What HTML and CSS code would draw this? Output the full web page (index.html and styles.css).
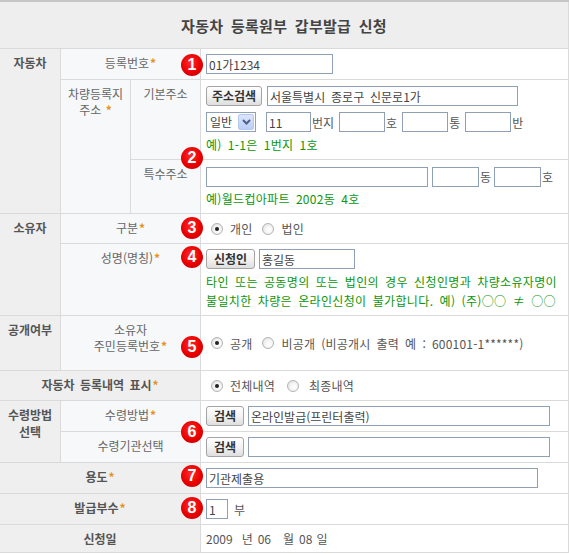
FILE: index.html
```html
<!DOCTYPE html>
<html lang="ko">
<head>
<meta charset="utf-8">
<title>자동차 등록원부 갑부발급 신청</title>
<link rel="stylesheet" href="styles.css">
</head>
<body>
<div class="form">
  <div class="title">자동차 등록원부 갑부발급 신청</div>

  <div class="sec rows3">자동차</div>
  <div class="lab cols2">등록번호<span class="req">*</span></div>
  <div class="val">
    <span class="badge b1">1</span>
    <input class="inp w127" type="text" value="01가1234">
  </div>

  <div class="lab rows2">차량등록지<br>주소 <span class="req">*</span></div>
  <div class="lab">기본주소</div>
  <div class="val stack addr">
    <span class="badge b2">2</span>
    <div class="line">
      <button class="btn w56" type="button">주소검색</button>
      <input class="inp w251" type="text" value="서울특별시 종로구 신문로1가">
    </div>
    <div class="line">
      <span class="sel"><span class="sel-text">일반</span><span class="sel-arrow"><svg width="9" height="6" viewBox="0 0 9 6"><path d="M1 1 L4.5 4.5 L8 1" fill="none" stroke="#4d6185" stroke-width="2"/></svg></span></span>
      <input class="inp w45 ml10" type="text" value="11"><span class="unit">번지</span>
      <input class="inp w46 ml5" type="text" value=""><span class="unit">호</span>
      <input class="inp w46 ml5" type="text" value=""><span class="unit">통</span>
      <input class="inp w46 ml5" type="text" value=""><span class="unit">반</span>
    </div>
    <div class="hint">예) 1-1은 1번지 1호</div>
  </div>

  <div class="lab">특수주소</div>
  <div class="val stack spec">
    <div class="line">
      <input class="inp w222" type="text" value="">
      <input class="inp w47 ml4" type="text" value=""><span class="unit">동</span>
      <input class="inp w47 ml3" type="text" value=""><span class="unit">호</span>
    </div>
    <div class="hint">예)월드컵아파트 2002동 4호</div>
  </div>

  <div class="sec rows2">소유자</div>
  <div class="lab cols2">구분<span class="req">*</span></div>
  <div class="val">
    <span class="badge b3">3</span>
    <span class="radio on"></span><span class="rtext">개인</span>
    <span class="radio ml9"></span><span class="rtext">법인</span>
  </div>

  <div class="lab cols2">성명(명칭)<span class="req">*</span></div>
  <div class="val stack name">
    <span class="badge b4">4</span>
    <div class="line">
      <button class="btn w49" type="button">신청인</button>
      <input class="inp w96 ml4" type="text" value="홍길동">
    </div>
    <div class="hint tall">타인 또는 공동명의 또는 법인의 경우 신청인명과 차량소유자명이<br>불일치한 차량은 온라인신청이 불가합니다. 예) (주)○○ ≠ ○○</div>
  </div>

  <div class="sec">공개여부</div>
  <div class="lab cols2">소유자<br>주민등록번호<span class="req">*</span></div>
  <div class="val">
    <span class="badge b5">5</span>
    <span class="radio on"></span><span class="rtext">공개</span>
    <span class="radio ml9"></span><span class="rtext">비공개 (비공개시 출력 예 : 600101-1******)</span>
  </div>

  <div class="sec cols3">자동차 등록내역 표시<span class="req">*</span></div>
  <div class="val">
    <span class="radio on"></span><span class="rtext">전체내역</span>
    <span class="radio ml12"></span><span class="rtext wide">최종내역</span>
  </div>

  <div class="sec rows2 tight">수령방법<br>선택</div>
  <div class="lab cols2">수령방법<span class="req">*</span></div>
  <div class="val">
    <span class="badge b6">6</span>
    <button class="btn w38" type="button">검색</button>
    <input class="inp w302 ml4" type="text" value="온라인발급(프린터출력)">
  </div>
  <div class="lab cols2">수령기관선택</div>
  <div class="val">
    <button class="btn w38" type="button">검색</button>
    <input class="inp w302 ml4" type="text" value="">
  </div>

  <div class="sec cols3">용도<span class="req">*</span></div>
  <div class="val">
    <span class="badge b7">7</span>
    <input class="inp w332" type="text" value="기관제출용">
  </div>

  <div class="sec cols3">발급부수<span class="req">*</span></div>
  <div class="val">
    <span class="badge b8">8</span>
    <input class="inp w22" type="text" value="1"><span class="unit u5">부</span>
  </div>

  <div class="sec cols3">신청일</div>
  <div class="val date">
    <span>2009</span><span class="d9">년</span><span class="d5">06</span><span class="d12">월</span><span class="d5">08</span><span class="d4">일</span>
  </div>
</div>
</body>
</html>
```

FILE: styles.css
```css
html, body {
  margin: 0;
  padding: 0;
  background: #ffffff;
}

body {
  font-family: "Noto Sans CJK KR", "Noto Sans", sans-serif;
  font-size: 12px;
  color: #555555;
}

.form {
  width: 569px;
  box-sizing: border-box;
  display: grid;
  grid-template-columns: 60px 69px 69px 367px;
  grid-template-rows: 46px 30px 79px 53px 29px 71px 54px 29px 30px 30px 30px 30px 27px;
  gap: 1px;
  background: #dadada;
  border-top: 2px solid #c6c6c6;
  padding: 0 1px 1px 0;
}

.title {
  grid-column: 1 / -1;
  background: #eeeeee;
  display: flex;
  align-items: center;
  justify-content: center;
  font-size: 15px;
  font-weight: bold;
  color: #444444;
  letter-spacing: 0.3px;
  word-spacing: 3px;
}

.sec {
  background: #efefef;
  font-weight: bold;
  color: #555555;
  text-align: center;
  padding-top: 6px;
  line-height: 16px;
  word-spacing: 2px;
}

.sec.tight {
  padding-top: 5px;
  line-height: 17px;
}

.lab {
  background: #f7f8fa;
  color: #666666;
  text-align: center;
  padding-top: 6px;
  line-height: 16px;
}

.rows2 { grid-row: span 2; }
.rows3 { grid-row: span 3; }
.cols2 { grid-column: span 2; }
.cols3 { grid-column: span 3; }

.req {
  color: #e8901c;
  font-weight: bold;
  margin-left: 1px;
}

.val {
  background: #ffffff;
  display: flex;
  align-items: center;
  padding-left: 5px;
  position: relative;
  color: #555555;
  word-spacing: 2.5px;
}

.val.stack {
  flex-direction: column;
  align-items: flex-start;
  justify-content: center;
}

.val.addr { gap: 6px; }
.val.addr .hint { margin-top: -1px; }
.val.spec { gap: 4px; }
.val.name { gap: 3px; }

.line {
  display: flex;
  align-items: center;
}

.inp {
  box-sizing: border-box;
  height: 20px;
  border: 1px solid #8e9fb6;
  padding: 0 2px;
  margin: 0;
  font-family: "Noto Sans CJK KR", "Noto Sans", sans-serif;
  font-size: 12px;
  color: #444444;
  background: #ffffff;
  outline: none;
  word-spacing: 2.5px;
}

.btn {
  box-sizing: border-box;
  height: 20px;
  padding: 0;
  margin: 0;
  border: 1px solid #a4a4a4;
  border-radius: 3px;
  background: linear-gradient(#ffffff 0%, #f3f3f3 50%, #dedede 100%);
  font-family: "Noto Sans CJK KR", "Noto Sans", sans-serif;
  font-size: 12px;
  font-weight: bold;
  color: #333333;
  line-height: 18px;
}

.w22 { width: 22px; }
.w38 { width: 38px; }
.w45 { width: 45px; }
.w46 { width: 46px; }
.w47 { width: 47px; }
.w49 { width: 49px; }
.w56 { width: 56px; margin-right: 5px; }
.w96 { width: 96px; }
.w127 { width: 127px; }
.w222 { width: 222px; }
.w251 { width: 251px; }
.w302 { width: 302px; }
.w332 { width: 332px; }

.ml3 { margin-left: 3px; }
.ml4 { margin-left: 4px; }
.ml5 { margin-left: 5px; }
.ml10 { margin-left: 10px; }

.unit {
  color: #555555;
  margin-left: 1px;
}

.unit.u5 { margin-left: 6px; }

.sel {
  box-sizing: border-box;
  width: 50px;
  height: 20px;
  border: 1px solid #8e9fb6;
  display: flex;
  align-items: center;
  justify-content: space-between;
  padding: 1px;
  background: #ffffff;
}

.sel-text {
  padding-left: 2px;
  color: #444444;
  line-height: 16px;
}

.sel-arrow {
  width: 16px;
  height: 16px;
  box-sizing: border-box;
  border: 1px solid #b7c8ee;
  border-radius: 2px;
  background: linear-gradient(#dbe5fd, #bccdf6);
  display: flex;
  align-items: center;
  justify-content: center;
}

.hint {
  color: #0c960c;
  line-height: 16px;
  letter-spacing: 0.3px;
}

.hint.tall {
  line-height: 19px;
  letter-spacing: 0.35px;
}

.radio {
  box-sizing: border-box;
  width: 12px;
  height: 12px;
  border-radius: 50%;
  border: 1px solid #b3b3b3;
  background: radial-gradient(circle at 60% 60%, #ffffff 0%, #f4f4f4 45%, #d6d6d6 100%);
  margin-left: 5px;
  margin-right: 7px;
  position: relative;
  flex: none;
}

.radio.on::after {
  content: "";
  position: absolute;
  left: 3px;
  top: 3px;
  width: 4px;
  height: 4px;
  border-radius: 50%;
  background: #222222;
}

.radio.ml9 { margin-left: 10px; }
.radio.ml12 { margin-left: 12px; }

.rtext {
  color: #555555;
  letter-spacing: 0.2px;
}

.rtext.wide { margin-left: 3px; }

.date span { color: #555555; }
.date .d9 { margin-left: 9px; }
.date .d5 { margin-left: 5px; }
.date .d12 { margin-left: 12px; }
.date .d4 { margin-left: 4px; }

.badge {
  position: absolute;
  left: -20px;
  width: 22px;
  height: 22px;
  border-radius: 50%;
  background: radial-gradient(circle at 45% 40%, #ff2b2b 0%, #e80000 55%, #b80000 100%);
  color: #ffffff;
  font-family: "Liberation Sans", Arial, sans-serif;
  font-weight: bold;
  font-size: 16px;
  line-height: 22px;
  text-align: center;
  z-index: 5;
}

.b1 { top: 5px; }
.b2 { top: 67px; }
.b3 { top: 3px; }
.b4 { top: 2px; }
.b5 { top: 20px; }
.b6 { top: 20px; }
.b7 { top: 2px; }
.b8 { top: 3px; }
```
